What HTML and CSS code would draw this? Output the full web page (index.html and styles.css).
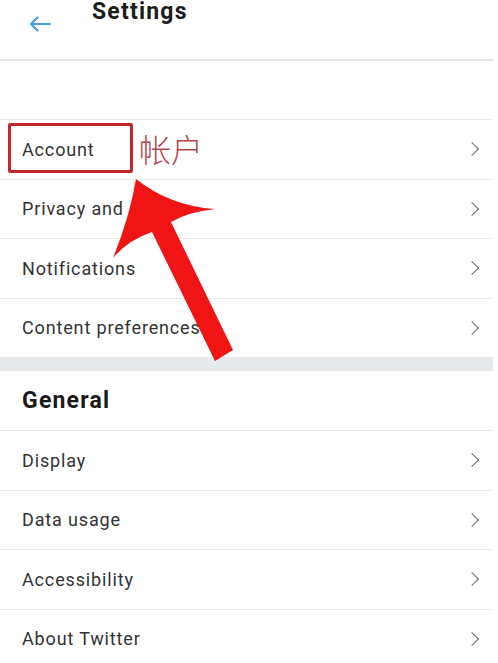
FILE: index.html
```html
<!DOCTYPE html>
<html lang="en">
<head>
    <meta charset="UTF-8">
    <meta name="viewport" content="width=device-width, initial-scale=1.0">
    <title>Settings</title>
    <link rel="stylesheet" href="styles.css">
</head>
<body>
    <div class="screen">
        <div class="header">
            <svg class="back" width="22" height="16" viewBox="0 0 22 16">
                <path d="M21 8H2M8.5 1.5L2 8l6.5 6.5" fill="none" stroke="#4a9edb" stroke-width="2.2" stroke-linecap="round" stroke-linejoin="round"/>
            </svg>
            <h1 class="title">Settings</h1>
        </div>

        <div class="list first">
            <div class="row"><span>Account</span><i class="chev"></i></div>
            <div class="row"><span>Privacy and safety</span><i class="chev"></i></div>
            <div class="row"><span>Notifications</span><i class="chev"></i></div>
            <div class="row"><span>Content preferences</span><i class="chev"></i></div>
        </div>

        <div class="band"></div>

        <div class="section-title">General</div>
        <div class="list">
            <div class="row"><span>Display</span><i class="chev"></i></div>
            <div class="row"><span>Data usage</span><i class="chev"></i></div>
            <div class="row"><span>Accessibility</span><i class="chev"></i></div>
            <div class="row"><span>About Twitter</span><i class="chev"></i></div>
        </div>

        <!-- annotations drawn over the screenshot -->
        <div class="mark-box"></div>
        <div class="mark-label">帐户</div>
        <svg class="mark-arrow" width="498" height="400" viewBox="0 0 498 400">
            <path d="M136 179 Q170 206 215 209 Q188 212 171 222 L233 350 L215 361 L152 232 Q128 240 113 258 Q130 216 136 179 Z" fill="#f01414"/>
        </svg>
    </div>
</body>
</html>
```

FILE: styles.css
```css
body {
    margin: 0;
    background: #fff;
    font-family: Roboto, "Liberation Sans", "Noto Sans CJK SC", sans-serif;
    color: #2a2a2a;
}
.screen {
    position: relative;
    width: 498px;
    height: 663px;
    overflow: hidden;
}
.header {
    display: flex;
    align-items: flex-start;
    height: 59px;
    border-bottom: 2px solid #e2e4e6;
    margin-right: 5px;
}
.back {
    margin: 16px 0 0 29px;
}
.title {
    margin: 0 0 0 41px;
    padding-top: 1px;
    font-size: 23px;
    line-height: 22px;
    letter-spacing: 1.2px;
    font-weight: 700;
    color: #1c1c1c;
}
.list {
    width: 493px;
}
.list.first {
    margin-top: 58px;
}
.row {
    display: flex;
    align-items: center;
    justify-content: space-between;
    height: 58.5px;
    border-top: 1px solid #ebebeb;
    padding: 0 14px 0 22px;
    font-size: 18px;
    letter-spacing: 0.85px;
    color: #333;
}
.chev {
    width: 9px;
    height: 9px;
    border-top: 1.8px solid #6a6a6a;
    border-right: 1.8px solid #6a6a6a;
    transform: rotate(45deg);
    margin-right: 2px;
}
.band {
    width: 493px;
    height: 14px;
    background: #e6eaec;
}
.section-title {
    height: 59px;
    line-height: 59px;
    padding-left: 22px;
    font-size: 23px;
    letter-spacing: 1.2px;
    font-weight: 700;
    color: #1a1a1a;
}
.section-title + .list .row:first-child {
    border-top-color: #e6e6e6;
}
.mark-box {
    position: absolute;
    left: 8px;
    top: 123px;
    width: 119px;
    height: 44px;
    border: 3px solid #c4252c;
    border-radius: 2px;
}
.mark-label {
    position: absolute;
    left: 139px;
    top: 128px;
    font-family: "Noto Sans CJK SC", sans-serif;
    font-weight: 300;
    font-size: 32px;
    line-height: 40px;
    color: #b4454b;
}
.mark-arrow {
    position: absolute;
    left: 0;
    top: 0;
}
```
